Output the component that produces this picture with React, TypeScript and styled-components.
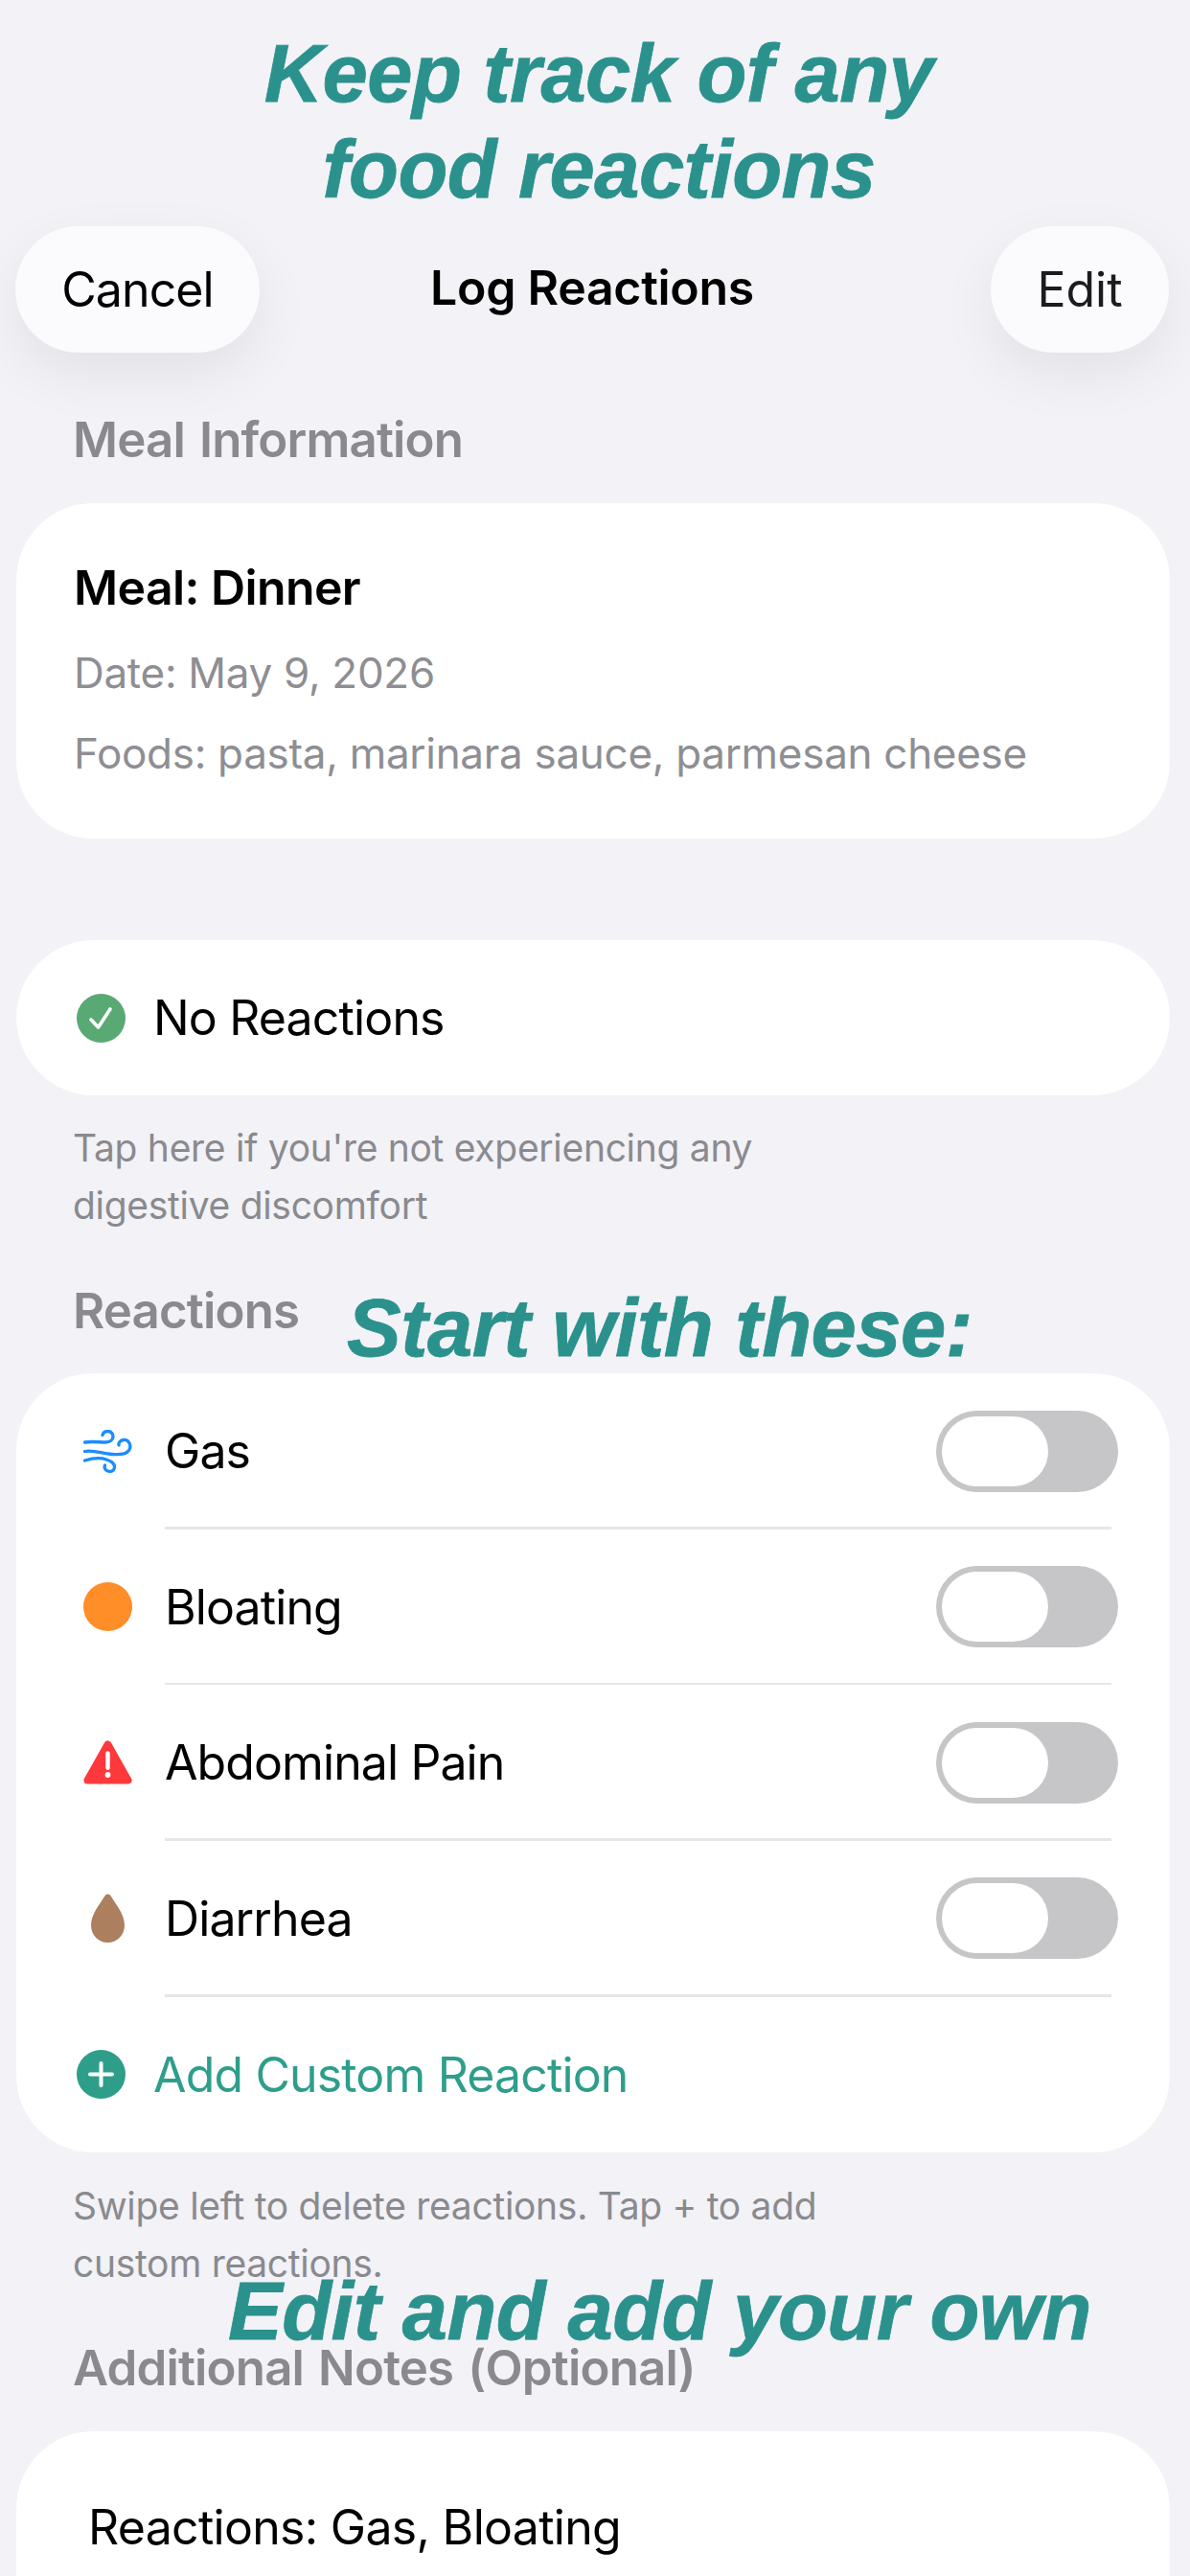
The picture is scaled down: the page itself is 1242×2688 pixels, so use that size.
import React from 'react'
import styled, { createGlobalStyle } from 'styled-components';

const GlobalStyle = createGlobalStyle`
  html, body {
    margin: 0;
    padding: 0;
    background: #f2f2f7;
  }
  * {
    box-sizing: border-box;
  }
`;

const Page = styled.div`
  position: relative;
  width: 1242px;
  height: 2688px;
  overflow: hidden;
  background: #f2f2f7;
  font-family: Inter, "Liberation Sans", sans-serif;
  color: #000;
`;

const Caption = styled.div`
  position: relative;
  z-index: 1;
  height: 212px;
  padding: 27px 0 0 8px;
  background: #f2f2f7;
  text-align: center;
  font-family: "Liberation Sans", Arial, sans-serif;
  font-size: 85px;
  line-height: 100px;
  font-weight: 700;
  font-style: italic;
  letter-spacing: -0.6px;
  -webkit-text-stroke: 0.8px #2b918c;
  color: #2b918c;
`;

const OverlayCaption = styled.div<{ $top: number; $left: number }>`
  position: absolute;
  z-index: 2;
  top: ${p => p.$top}px;
  left: ${p => p.$left}px;
  white-space: nowrap;
  font-family: "Liberation Sans", Arial, sans-serif;
  font-size: 85px;
  line-height: 100px;
  font-weight: 700;
  font-style: italic;
  letter-spacing: -0.5px;
  -webkit-text-stroke: 0.8px #2b918c;
  color: #2b918c;
`;

const NavBar = styled.header`
  display: grid;
  grid-template-columns: 1fr auto 1fr;
  align-items: center;
  height: 132px;
  margin-top: 24px;
  padding: 0 22px 0 16px;
`;

const NavPill = styled.div<{ $end?: boolean }>`
  display: flex;
  align-items: center;
  justify-content: center;
  justify-self: ${p => (p.$end ? 'end' : 'start')};
  width: ${p => (p.$end ? '186px' : '255px')};
  height: 132px;
  border-radius: 66px;
  background: #fbfbfe;
  box-shadow: 0 22px 60px rgba(0, 0, 0, 0.07);
  font-size: 50px;
  letter-spacing: ${p => (p.$end ? '0' : '-0.9px')};
  color: ${p => (p.$end ? '#1c1c1e' : '#000')};
`;

const NavTitle = styled.div`
  padding-bottom: 4px;
  font-size: 50px;
  font-weight: 600;
  letter-spacing: -0.3px;
`;

const SectionLabel = styled.div<{ $top: number; $bottom: number }>`
  margin: ${p => p.$top}px 0 ${p => p.$bottom}px 76px;
  font-size: 51px;
  line-height: 60px;
  font-weight: 600;
  letter-spacing: -0.85px;
  word-spacing: 3px;
  color: #8a8a8e;
`;

const Card = styled.section`
  margin: 0 21px 0 17px;
  background: #fff;
  border-radius: 80px;
`;

const MealCard = styled(Card)`
  height: 350px;
  padding: 58px 60px 0;
`;

const MealName = styled.div`
  margin-bottom: 29px;
  font-size: 50px;
  line-height: 60px;
  font-weight: 600;
  letter-spacing: -0.6px;
`;

const MealDetail = styled.div`
  margin-bottom: 24px;
  font-size: 44px;
  line-height: 60px;
  letter-spacing: -0.3px;
  color: #8e8e93;
`;

const SingleCard = styled(Card)`
  display: flex;
  align-items: center;
  gap: 29px;
  height: 162px;
  margin-top: 106px;
  padding-left: 63px;
  border-radius: 81px;
  font-size: 50px;
  letter-spacing: -0.85px;
`;

const HelpText = styled.p<{ $top: number }>`
  width: 800px;
  margin: ${p => p.$top}px 0 0 76px;
  font-size: 39px;
  line-height: 60px;
  letter-spacing: -0.3px;
  color: #8a8a8e;
`;

const Row = styled.div`
  display: flex;
  align-items: center;
  height: 160px;
  padding: 2px 54px 0 70px;
  font-size: 50px;
  letter-spacing: -0.9px;
`;

const RowIcon = styled.div`
  display: flex;
  align-items: center;
  justify-content: center;
  flex: none;
  width: 51px;
  height: 51px;
  margin-right: 34px;
`;

const RowLabel = styled.span`
  flex: 1;
`;

const Separator = styled.div`
  height: 2.67px;
  margin: 0 61px 0 155px;
  background: #e6e6e8;
`;

const AddRow = styled.div`
  display: flex;
  align-items: center;
  gap: 29px;
  height: 162px;
  padding-left: 63px;
  font-size: 50px;
  letter-spacing: -0.85px;
  color: #2e9e8b;
`;

const Toggle = styled.div`
  flex: none;
  width: 190px;
  height: 85px;
  padding: 6px;
  border-radius: 43px;
  background: #c6c6c8;
`;

const Knob = styled.div`
  width: 111px;
  height: 73px;
  border-radius: 37px;
  background: #fff;
`;

const Dot = styled.div`
  width: 51px;
  height: 51px;
  border-radius: 50%;
  background: #ff8d28;
`;

const NotesCard = styled(Card)`
  height: 300px;
  padding: 70px 0 0 75px;
  font-size: 50px;
  line-height: 60px;
  letter-spacing: -0.7px;
`;

const CheckCircle = () => (
  <svg width="51" height="51" viewBox="0 0 51 51">
    <circle cx="25.5" cy="25.5" r="25.5" fill="#59a975" />
    <path d="M15 27l7.5 8L35 16" fill="none" stroke="#fff" strokeWidth="3.6" strokeLinecap="round" strokeLinejoin="round" />
  </svg>
);

const PlusCircle = () => (
  <svg width="51" height="51" viewBox="0 0 51 51">
    <circle cx="25.5" cy="25.5" r="25.5" fill="#2e9e8b" />
    <path d="M25.5 14v23M14 25.5h23" fill="none" stroke="#fff" strokeWidth="4" strokeLinecap="round" />
  </svg>
);

const WindIcon = () => (
  <svg width="51" height="45" viewBox="0 0 51 45" fill="none" stroke="#1a8cff" strokeWidth="3.3" strokeLinecap="round">
    <path d="M1.5 13C9 11.8 17 13 23 13C28 13 31 10.5 31 7C31 3.5 28.5 1.5 25.5 1.5C22.5 1.5 20.5 3 20 5.5" />
    <path d="M1.5 22.5C10 20.5 20 25 30 25.5C36 26 44 26.5 47.5 21.5C51 16 47 10 42 10.5C38.5 11 36.5 13.5 37 16" />
    <path d="M1.5 32C10 29.5 18 29 24 31C30 33 33 36 32.5 39.5C32 43 28.5 44 25.5 43C22.5 42 21.5 39.5 22.5 37" />
  </svg>
);

const WarningIcon = () => (
  <svg width="53" height="48" viewBox="0 0 53 48">
    <path d="M26.5 4.5L48.5 43.5H4.5Z" fill="#ff383c" stroke="#ff383c" strokeWidth="8" strokeLinejoin="round" />
    <path d="M26.5 14v16" stroke="#fff" strokeWidth="4.6" strokeLinecap="round" />
    <circle cx="26.5" cy="37.5" r="3" fill="#fff" />
  </svg>
);

const DropIcon = () => (
  <svg width="35" height="51" viewBox="0 0 35 51">
    <path d="M17.5 0.5C19.5 0.5 20.5 2 22 4.5C26 11 35 22 35 33C35 43.5 27 51 17.5 51C8 51 0 43.5 0 33C0 22 9 11 13 4.5C14.5 2 15.5 0.5 17.5 0.5Z" fill="#ac7f5e" />
  </svg>
);

const reactions = [
  { name: 'Gas', icon: <WindIcon /> },
  { name: 'Bloating', icon: <Dot /> },
  { name: 'Abdominal Pain', icon: <WarningIcon /> },
  { name: 'Diarrhea', icon: <DropIcon /> },
];

const App = () => {
  return <Page>
    <GlobalStyle />
    <Caption>
      Keep track of any<br />food reactions
    </Caption>

    <NavBar>
      <NavPill>Cancel</NavPill>
      <NavTitle>Log Reactions</NavTitle>
      <NavPill $end>Edit</NavPill>
    </NavBar>

    <SectionLabel $top={61} $bottom={36}>Meal Information</SectionLabel>
    <MealCard>
      <MealName>Meal: Dinner</MealName>
      <MealDetail>Date: May 9, 2026</MealDetail>
      <MealDetail>Foods: pasta, marinara sauce, parmesan cheese</MealDetail>
    </MealCard>

    <SingleCard>
      <CheckCircle />
      No Reactions
    </SingleCard>
    <HelpText $top={25}>Tap here if you're not experiencing any digestive discomfort</HelpText>

    <SectionLabel $top={50} $bottom={35}>Reactions</SectionLabel>
    <Card>
      {reactions.map(r => (
        <React.Fragment key={r.name}>
          <Row>
            <RowIcon>{r.icon}</RowIcon>
            <RowLabel>{r.name}</RowLabel>
            <Toggle><Knob /></Toggle>
          </Row>
          <Separator />
        </React.Fragment>
      ))}
      <AddRow>
        <PlusCircle />
        Add Custom Reaction
      </AddRow>
    </Card>
    <HelpText $top={26}>Swipe left to delete reactions. Tap + to add custom reactions.</HelpText>

    <SectionLabel $top={49} $bottom={36}>Additional Notes (Optional)</SectionLabel>
    <NotesCard>Reactions: Gas, Bloating</NotesCard>

    <OverlayCaption $top={1336} $left={362}>Start with these:</OverlayCaption>
    <OverlayCaption $top={2362} $left={238}>Edit and add your own</OverlayCaption>
  </Page>
};

export default App
